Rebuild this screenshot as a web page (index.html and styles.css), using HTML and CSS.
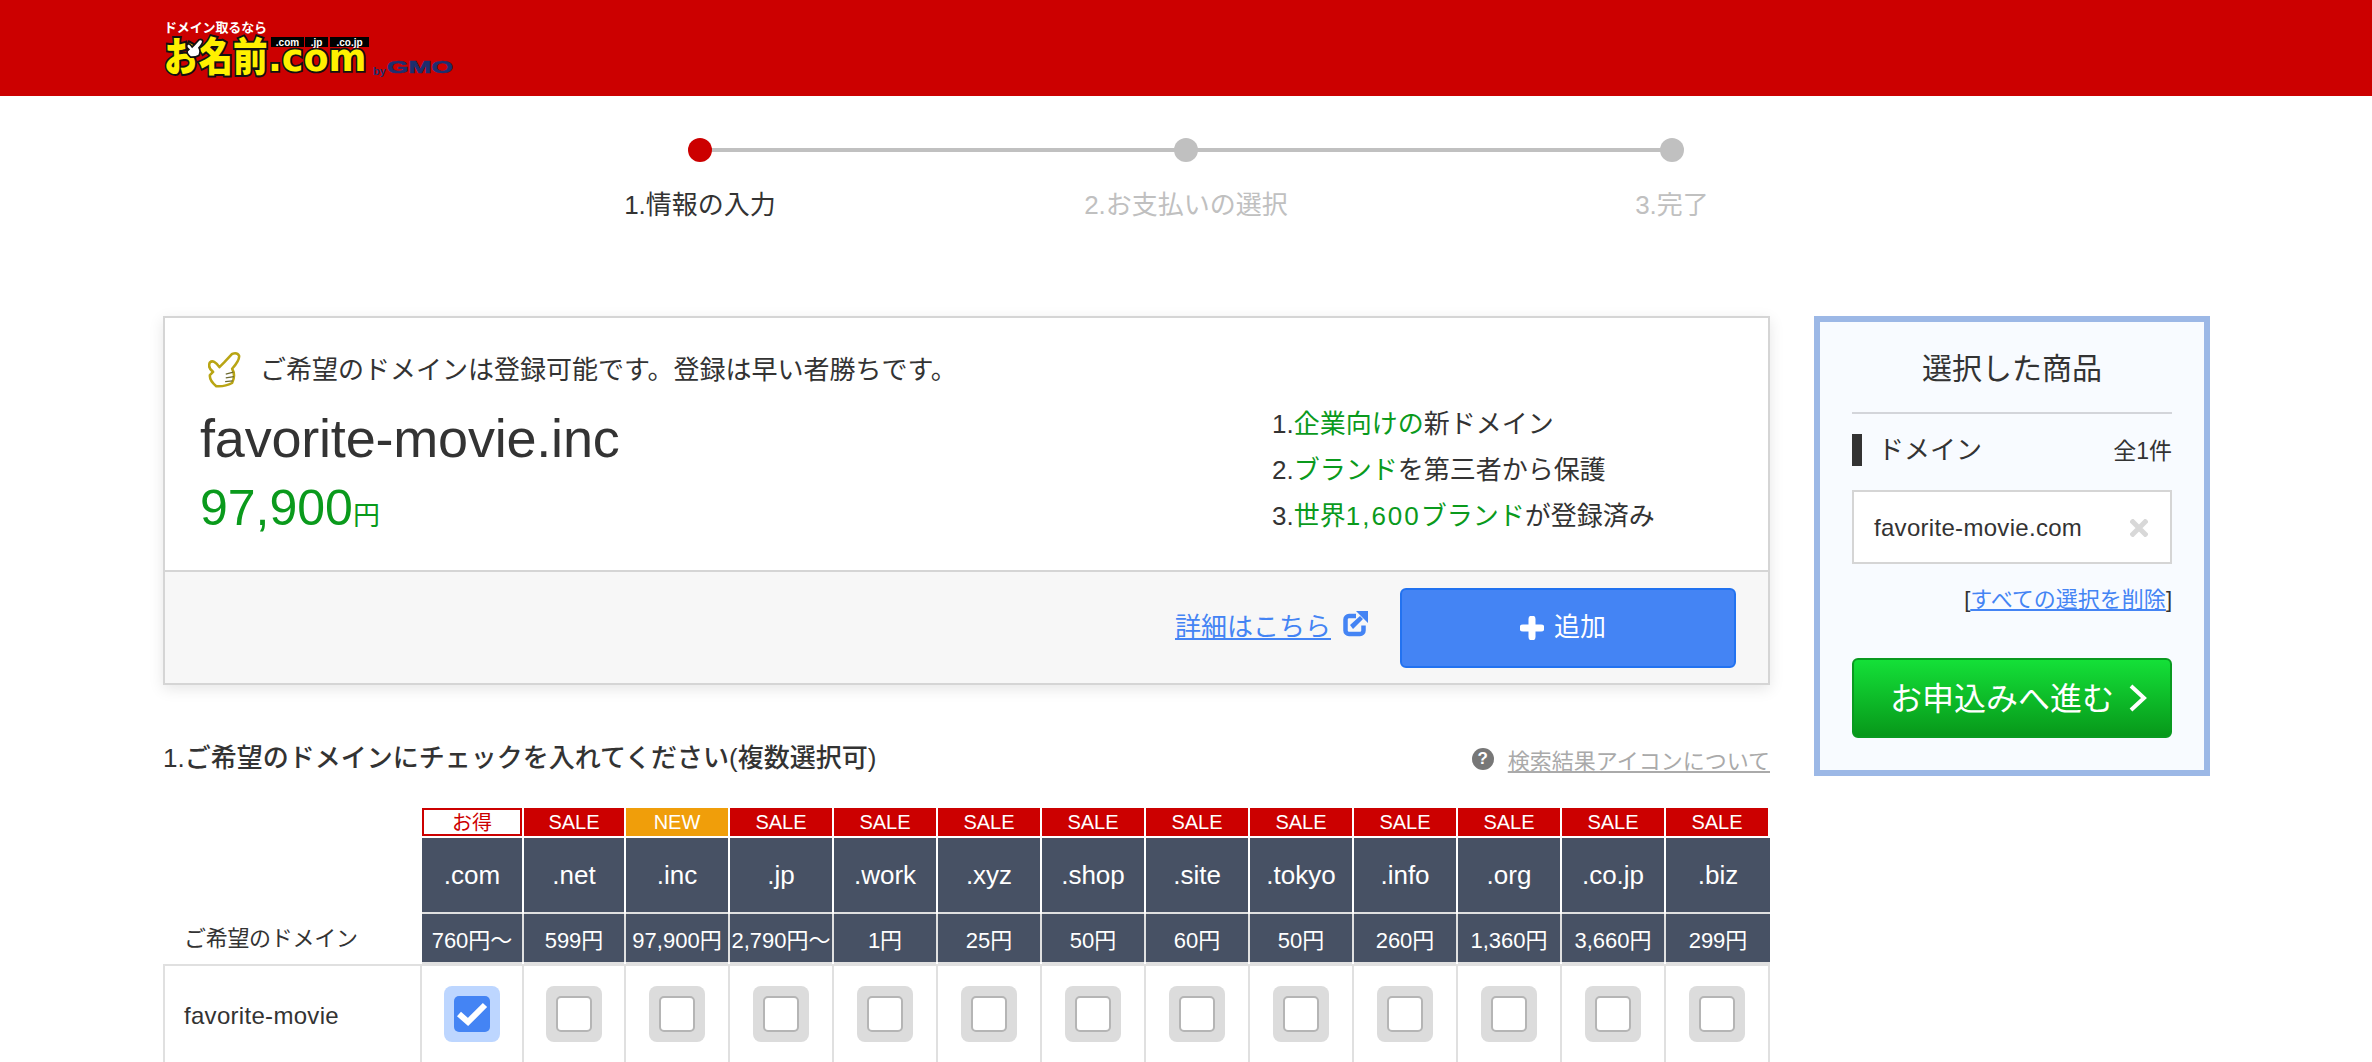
FILE: index.html
```html
<!DOCTYPE html>
<html lang="ja">
<head>
    <meta charset="UTF-8">
    <meta name="viewport" content="width=device-width, initial-scale=1.0">
    <title>お名前.com</title>
    <link rel="stylesheet" href="styles.css">
</head>
<body>

<header class="site-header">
    <svg class="logo" width="300" height="64" viewBox="0 0 300 64">
        <text class="logo-top" x="4" y="16" textLength="103">ドメイン取るなら</text>
        <text class="logo-jp" transform="translate(4 55) scale(1 1.150)">お名前</text>
        <text class="logo-com" transform="translate(108 55) scale(1 1.040)">.com</text>
        <rect x="111" y="21" width="33" height="10"/>
        <rect x="145" y="21" width="23" height="10"/>
        <rect x="170" y="21" width="39" height="10"/>
        <text class="logo-tag" x="127.5" y="30">.com</text>
        <text class="logo-tag" x="156.5" y="30">.jp</text>
        <text class="logo-tag" x="189.5" y="30">.co.jp</text>
        <g transform="translate(22 19) scale(.17)">
            <path class="logo-hand" d="M50 130 Q28 112 30 95 L40 85 Q22 72 30 55 Q42 44 60 70 L75 55 L100 28 Q116 22 122 34 Q124 48 100 75 Q112 95 100 120 Q78 132 50 130Z"/>
        </g>
        <text class="logo-gmo" x="213" y="59" font-size="11">by</text>
        <text class="logo-gmo logo-gmo-big" x="227" y="57" font-size="16" textLength="66" lengthAdjust="spacingAndGlyphs">GMO</text>
    </svg>
</header>

<div class="stepper">
    <div class="step active"><span class="dot"></span><span class="step-label">1.情報の入力</span></div>
    <div class="step"><span class="dot"></span><span class="step-label">2.お支払いの選択</span></div>
    <div class="step last-step"><span class="dot"></span><span class="step-label">3.完了</span></div>
</div>

<div class="main">
    <div class="content">
        <section class="card">
            <div class="card-body">
                <div class="card-left">
                    <p class="notice">
                        <svg class="hand" width="33" height="38" viewBox="24 22 104 114">
                            <path d="M50 130 Q28 112 30 95 L40 85 Q22 72 30 55 Q42 44 60 70 L75 55 L100 28 Q116 22 122 34 Q124 48 100 75 Q112 95 100 120 Q78 132 50 130Z" fill="#fff" stroke="#b9a514" stroke-width="8" stroke-linejoin="round"/>
                            <path d="M80 92 L104 86 M80 104 L106 100 M78 116 L102 113" fill="none" stroke="#6d6a30" stroke-width="4"/>
                        </svg>
                        <span class="notice-text">ご希望のドメインは登録可能です。登録は早い者勝ちです。</span>
                    </p>
                    <p class="domain-name">favorite-movie.inc</p>
                    <p class="domain-price">97,900<span class="yen">円</span></p>
                </div>
                <ul class="points">
                    <li>1.<em>企業向けの</em>新ドメイン</li>
                    <li>2.<em>ブランド</em>を第三者から保護</li>
                    <li>3.<em>世界<span class="digits">1,600</span>ブランド</em>が登録済み</li>
                </ul>
            </div>
            <div class="card-foot">
                <a class="detail-link" href="#"><span>詳細はこちら</span>
                    <svg width="26" height="26" viewBox="0 0 26 26">
                        <path d="M14 5 H7 a3.500 3.500 0 0 0 -3.500 3.500 v11 a3.500 3.500 0 0 0 3.500 3.500 h11 a3.500 3.500 0 0 0 3.500 -3.500 v-5" fill="none" stroke="#4484f4" stroke-width="4.500"/>
                        <path d="M14 0 H26 V12Z M8 14 L18 5 L21 8 L11 18Z" fill="#4484f4"/>
                    </svg>
                </a>
                <button class="add-btn">
                    <svg width="24" height="24" viewBox="0 0 24 24"><path d="M12 3 V21 M3 12 H21" stroke="#fff" stroke-width="7" stroke-linecap="round"/></svg>
                    <span>追加</span>
                </button>
            </div>
        </section>

        <div class="section-head">
            <h2>1.ご希望のドメインにチェックを入れてください(複数選択可)</h2>
            <a class="help-link" href="#"><span class="help-icon">?</span><span class="help-text">検索結果アイコンについて</span></a>
        </div>

        <div class="tld-grid">
            <div class="tag tag-best">お得</div>
            <div class="tag">SALE</div>
            <div class="tag tag-new">NEW</div>
            <div class="tag">SALE</div>
            <div class="tag">SALE</div>
            <div class="tag">SALE</div>
            <div class="tag">SALE</div>
            <div class="tag">SALE</div>
            <div class="tag">SALE</div>
            <div class="tag">SALE</div>
            <div class="tag">SALE</div>
            <div class="tag">SALE</div>
            <div class="tag tag-last">SALE</div>

            <div class="tld">.com</div>
            <div class="tld">.net</div>
            <div class="tld">.inc</div>
            <div class="tld">.jp</div>
            <div class="tld">.work</div>
            <div class="tld">.xyz</div>
            <div class="tld">.shop</div>
            <div class="tld">.site</div>
            <div class="tld">.tokyo</div>
            <div class="tld">.info</div>
            <div class="tld">.org</div>
            <div class="tld">.co.jp</div>
            <div class="tld">.biz</div>

            <div class="price-label">ご希望のドメイン</div>
            <div class="price">760円〜</div>
            <div class="price">599円</div>
            <div class="price">97,900円</div>
            <div class="price">2,790円〜</div>
            <div class="price">1円</div>
            <div class="price">25円</div>
            <div class="price">50円</div>
            <div class="price">60円</div>
            <div class="price">50円</div>
            <div class="price">260円</div>
            <div class="price">1,360円</div>
            <div class="price">3,660円</div>
            <div class="price price-last">299円</div>
        </div>

        <div class="domain-row">
            <div class="row-name">favorite-movie</div>
            <div class="row-cell">
                <span class="tile tile-on"><span class="box">
                    <svg width="36" height="36" viewBox="0 0 36 36"><path d="M5 18 L14 26 L31 9" fill="none" stroke="#fff" stroke-width="6"/></svg>
                </span></span>
            </div>
            <div class="row-cell"><span class="tile"><span class="box"></span></span></div>
            <div class="row-cell"><span class="tile"><span class="box"></span></span></div>
            <div class="row-cell"><span class="tile"><span class="box"></span></span></div>
            <div class="row-cell"><span class="tile"><span class="box"></span></span></div>
            <div class="row-cell"><span class="tile"><span class="box"></span></span></div>
            <div class="row-cell"><span class="tile"><span class="box"></span></span></div>
            <div class="row-cell"><span class="tile"><span class="box"></span></span></div>
            <div class="row-cell"><span class="tile"><span class="box"></span></span></div>
            <div class="row-cell"><span class="tile"><span class="box"></span></span></div>
            <div class="row-cell"><span class="tile"><span class="box"></span></span></div>
            <div class="row-cell"><span class="tile"><span class="box"></span></span></div>
            <div class="row-cell"><span class="tile"><span class="box"></span></span></div>
        </div>
    </div>

    <aside class="cart">
        <h3>選択した商品</h3>
        <div class="cart-head">
            <span class="cart-type">ドメイン</span>
            <span class="cart-count">全1件</span>
        </div>
        <div class="cart-item">
            <span>favorite-movie.com</span>
            <svg width="18" height="18" viewBox="0 0 18 18"><path d="M1 1 L17 17 M17 1 L1 17" stroke="#d8d8d8" stroke-width="5"/></svg>
        </div>
        <p class="clear-all">[<a href="#">すべての選択を削除</a>]</p>
        <button class="next-btn">
            <span>お申込みへ進む</span>
            <svg width="20" height="28" viewBox="0 0 20 28"><path d="M3 2 L16 14 L3 26" fill="none" stroke="#fff" stroke-width="4"/></svg>
        </button>
    </aside>
</div>

</body>
</html>
```

FILE: styles.css
```css
* {
    box-sizing: border-box;
}
html, body {
    height: 100%;
    overflow: hidden;
}
body {
    margin: 0;
    background-color: #fff;
    color: #333;
    font-family: "Liberation Sans", "Noto Sans CJK JP", sans-serif;
}
p, ul, h2, h3 {
    margin: 0;
    padding: 0;
    font-weight: normal;
}

/* header */
.site-header {
    height: 96px;
    padding: 16px 0 0 160px;
    background-color: #cc0000;
}
.logo {
    display: block;
}
.logo text {
    font-family: "Noto Sans CJK JP", "Liberation Sans", sans-serif;
}
.logo .logo-top {
    font-size: 13px;
    font-weight: 700;
    fill: #fff;
}
.logo .logo-jp {
    font-size: 34.500px;
    font-weight: 900;
    fill: #fff000;
    stroke: #111;
    stroke-width: 3.500px;
    paint-order: stroke;
}
.logo .logo-com {
    font-family: "DejaVu Sans", sans-serif;
    font-size: 36.500px;
    font-weight: 700;
    fill: #fff000;
    stroke: #111;
    stroke-width: 3.500px;
    paint-order: stroke;
}
.logo .logo-tag {
    font-family: "Liberation Sans", sans-serif;
    font-size: 10px;
    font-weight: 700;
    fill: #fff;
    text-anchor: middle;
}
.logo .logo-gmo {
    font-family: "Liberation Sans", sans-serif;
    font-weight: 700;
    fill: #1d2f6f;
}
.logo .logo-gmo-big {
    stroke: #1d2f6f;
    stroke-width: .6px;
}
.logo-hand {
    fill: #fff;
    stroke: #111;
    stroke-width: 10px;
}

/* stepper */
.stepper {
    display: flex;
    justify-content: center;
    padding-top: 42px;
    margin-bottom: 93px;
}
.step {
    position: relative;
    display: flex;
    flex-direction: column;
    align-items: center;
    width: 486px;
    color: #c0c0c0;
}
.step::after {
    content: "";
    position: absolute;
    top: 10px;
    left: 50%;
    width: 100%;
    height: 4px;
    background-color: #c0c0c0;
}
.last-step::after {
    display: none;
}
.dot {
    position: relative;
    z-index: 1;
    width: 24px;
    height: 24px;
    border-radius: 50%;
    background-color: #c0c0c0;
}
.step-label {
    margin-top: 25px;
    font-size: 26px;
    line-height: 36px;
}
.step.active {
    color: #333;
}
.active .dot {
    background-color: #cc0000;
}

/* layout */
.main {
    display: flex;
    align-items: flex-start;
    padding-left: 163px;
}
.content {
    width: 1607px;
}

/* result card */
.card {
    border: 2px solid #d5d5d5;
    box-shadow: 0 4px 14px rgba(0, 0, 0, 0.1);
}
.card-body {
    display: flex;
    justify-content: space-between;
    height: 252px;
    padding: 32px 0 0 35px;
}
.notice {
    display: flex;
    align-items: center;
    height: 40px;
    padding-left: 8px;
    font-size: 26px;
}
.notice-text {
    margin-bottom: 6px;
}
.hand {
    margin-right: 19px;
}
.domain-name {
    margin-top: 18px;
    font-size: 54px;
    line-height: 60px;
    letter-spacing: -.2px;
}
.domain-price {
    margin-top: 10px;
    font-size: 50px;
    line-height: 60px;
    color: #0a9a1c;
}
.yen {
    font-size: 27px;
}
.points {
    width: 496px;
    margin-top: 51px;
    list-style: none;
    font-size: 26px;
    line-height: 46px;
}
.points em {
    font-style: normal;
    color: #0a9a1c;
}
.digits {
    letter-spacing: 2px;
}
.card-foot {
    display: flex;
    justify-content: flex-end;
    align-items: center;
    height: 113px;
    padding: 0 32px 0 0;
    border-top: 2px solid #d5d5d5;
    background-color: #f7f7f7;
}
.detail-link {
    display: flex;
    align-items: center;
    gap: 11px;
    margin-right: 32px;
    padding-bottom: 7px;
    font-size: 26px;
    color: #4484f4;
    text-decoration: none;
}
.detail-link span {
    text-decoration: underline;
}
.add-btn {
    display: flex;
    justify-content: center;
    align-items: center;
    gap: 10px;
    width: 336px;
    height: 80px;
    padding: 0 10px 0 0;
    border: 2px solid #2272f0;
    border-radius: 6px;
    background-color: #4484f4;
    color: #fff;
    font-family: inherit;
    font-size: 26px;
}
.add-btn span {
    margin-bottom: 7px;
}

/* section heading */
.section-head {
    display: flex;
    justify-content: space-between;
    align-items: center;
    height: 36px;
    margin-top: 52px;
    margin-bottom: 35px;
}
.section-head h2 {
    font-size: 26px;
    font-weight: 500;
}
.help-link {
    display: flex;
    align-items: center;
    gap: 14px;
    margin-top: 8px;
    font-size: 22px;
    color: #aaa;
    text-decoration: none;
}
.help-text {
    text-decoration: underline;
}
.help-icon {
    display: flex;
    justify-content: center;
    align-items: center;
    width: 22px;
    height: 22px;
    border-radius: 50%;
    background-color: #777;
    color: #fff;
    font-size: 17px;
    font-weight: 700;
}

/* tld table */
.tld-grid {
    display: grid;
    grid-template-columns: 257px 100px 100px repeat(10, 102px) 104px;
    grid-template-rows: 28px 74px 48px;
    gap: 2px;
    text-align: center;
}
.tag {
    background-color: #cc0000;
    color: #fff;
    font-size: 20px;
    line-height: 28px;
}
.tag-best {
    grid-column-start: 2;
    border: 2px solid #cc0000;
    background-color: #fff;
    color: #cc0000;
    line-height: 26px;
}
.tag-new {
    background-color: #f09e0a;
}
.tag-last {
    margin-right: 2px;
}
.tld {
    display: flex;
    justify-content: center;
    align-items: center;
    background-color: #475164;
    color: #fff;
    font-size: 26px;
}
.tld:nth-child(14) {
    grid-column-start: 2;
}
.price-label {
    padding-left: 21px;
    font-size: 22px;
    line-height: 50px;
    letter-spacing: -.3px;
    text-align: left;
}
.price {
    display: flex;
    justify-content: center;
    align-items: center;
    background-color: #475164;
    box-shadow: 2px 0 0 #e0e0e0, 0 -2px 0 #e0e0e0, 0 2px 0 #e0e0e0;
    color: #fff;
    font-size: 22px;
    white-space: nowrap;
}
.price-last {
    box-shadow: 0 -2px 0 #e0e0e0, 0 2px 0 #e0e0e0;
}

/* domain row */
.domain-row {
    display: grid;
    grid-template-columns: 255px 100px 100px repeat(10, 102px) 102px;
    gap: 2px;
    height: 110px;
    margin-top: 2px;
    border: 2px solid #e0e0e0;
    background-color: #e0e0e0;
}
.row-name {
    padding: 36px 0 0 19px;
    background-color: #fff;
    font-size: 24px;
    letter-spacing: .3px;
}
.row-cell {
    display: flex;
    justify-content: center;
    padding-top: 20px;
    background-color: #fff;
}
.tile {
    display: flex;
    justify-content: center;
    align-items: center;
    width: 56px;
    height: 56px;
    border-radius: 8px;
    background-color: #dcdcdc;
}
.box {
    width: 36px;
    height: 36px;
    border: 2px solid #b5b5b5;
    border-radius: 5px;
    background-color: #fff;
}
.tile-on {
    background-color: #bdd6ff;
}
.tile-on .box {
    border: none;
    background-color: #4484f4;
}
.box svg {
    display: block;
}

/* selected items */
.cart {
    width: 396px;
    height: 460px;
    margin-left: 44px;
    padding: 24px 32px 0;
    border: 6px solid #9cb8e6;
    background-color: #f8fbff;
}
.cart h3 {
    padding: 1px 0 21px;
    border-bottom: 2px solid #d3d5da;
    font-size: 30px;
    line-height: 44px;
    text-align: center;
}
.cart-head {
    display: flex;
    justify-content: space-between;
    align-items: center;
    height: 32px;
    margin-top: 20px;
    border-left: 10px solid #333;
    padding-left: 16px;
}
.cart-type {
    margin-bottom: 5px;
    font-size: 26px;
}
.cart-count {
    margin-bottom: 3px;
    font-size: 23px;
}
.cart-item {
    display: flex;
    justify-content: space-between;
    align-items: center;
    height: 74px;
    margin-top: 24px;
    padding: 2px 22px 0 20px;
    border: 2px solid #d5d5d5;
    background-color: #fff;
    font-size: 24px;
    letter-spacing: .3px;
}
.clear-all {
    margin-top: 21px;
    font-size: 22px;
    line-height: 30px;
    text-align: right;
}
.clear-all a {
    color: #4484f4;
}
.next-btn {
    display: flex;
    justify-content: center;
    align-items: center;
    gap: 14px;
    width: 320px;
    height: 80px;
    margin-top: 43px;
    padding: 0 0 0 14px;
    border: 2px solid #0a9a20;
    border-radius: 6px;
    background: linear-gradient(#14e038, #07981a);
    color: #fff;
    font-family: inherit;
    font-size: 32px;
}
.next-btn span {
    margin-bottom: 5px;
}
```
